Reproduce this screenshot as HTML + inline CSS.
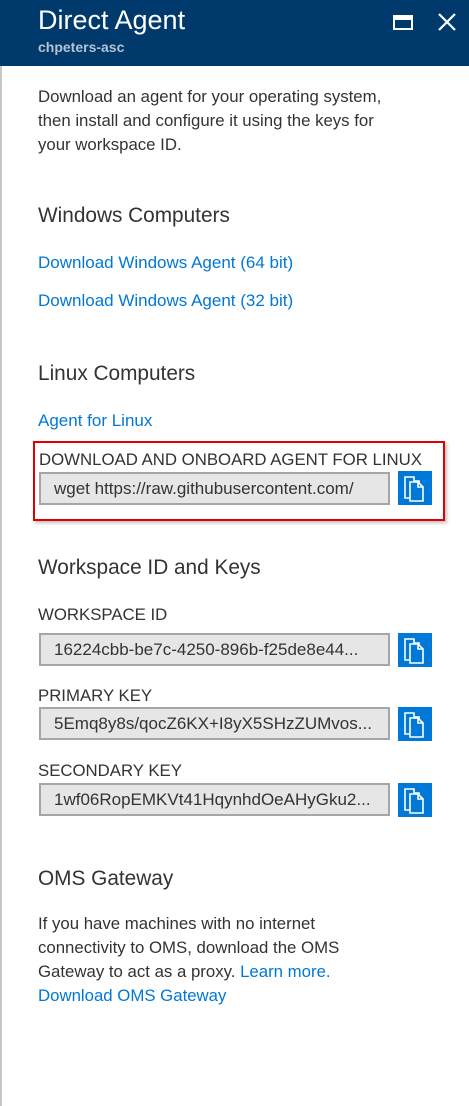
<!DOCTYPE html>
<html><head><style>
*{margin:0;padding:0;box-sizing:border-box}
body{width:469px;height:1106px;background:#fff;font-family:"Liberation Sans",sans-serif;color:#333;position:relative;overflow:hidden}
.a{position:absolute;white-space:nowrap}
.hdr{position:absolute;left:0;top:0;width:469px;height:66px;background:#003a6c}
.lb{position:absolute;left:0;top:66px;width:2px;height:1040px;background:#c8c8c8}
.t{font-size:16.8px;line-height:24px}
.h{font-size:20.8px;color:#333}
.l{color:#0078d7;font-size:17px}
.lab{font-size:16.8px;color:#333}
.in{position:absolute;left:39px;width:351px;height:33px;background:#e6e6e6;border:2px solid #a6a6a6;font-size:17px;line-height:29px;padding-left:13px;color:#333;white-space:nowrap;overflow:hidden}
.btn{position:absolute;left:398px;width:34px;height:34px;background:#0078d7}
</style></head><body>
<div class="hdr"></div>
<div class="a" style="left:38px;top:5px;font-size:27px;color:#fff">Direct Agent</div>
<div class="a" style="left:38px;top:39px;font-size:14px;font-weight:bold;color:#b4c2d2">chpeters-asc</div>
<div style="position:absolute;left:393px;top:15px;width:20px;height:15px;border:2px solid #fff;border-top-width:5px"></div>
<svg style="position:absolute;left:438px;top:13px" width="18" height="18" viewBox="0 0 18 18"><path d="M1 1L17 17M17 1L1 17" stroke="#fff" stroke-width="2.2"/></svg>
<div class="lb"></div>

<div class="a t" style="left:38px;top:85px">Download an agent for your operating system,<br>then install and configure it using the keys for<br>your workspace ID.</div>
<div class="a h" style="left:38px;top:204px">Windows Computers</div>
<div class="a l" style="left:38px;top:253px">Download Windows Agent (64 bit)</div>
<div class="a l" style="left:38px;top:291px">Download Windows Agent (32 bit)</div>
<div class="a h" style="left:38px;top:362px">Linux Computers</div>
<div class="a l" style="left:38px;top:411px">Agent for Linux</div>

<div style="position:absolute;left:33px;top:441px;width:412px;height:80px;border:2px solid #e00000;box-shadow:2px 2px 3px rgba(0,0,0,.25)"></div>
<div class="a lab" style="left:39px;top:450px">DOWNLOAD AND ONBOARD AGENT FOR LINUX</div>
<div class="in" style="top:472px">wget https://raw.githubusercontent.com/</div>
<div class="btn" style="top:471px"></div>

<div class="a h" style="left:38px;top:556px">Workspace ID and Keys</div>
<div class="a lab" style="left:38px;top:605px">WORKSPACE ID</div>
<div class="in" style="top:633px">16224cbb-be7c-4250-896b-f25de8e44...</div>
<div class="btn" style="top:633px"></div>
<div class="a lab" style="left:38px;top:686px">PRIMARY KEY</div>
<div class="in" style="top:707px">5Emq8y8s/qocZ6KX+I8yX5SHzZUMvos...</div>
<div class="btn" style="top:707px"></div>
<div class="a lab" style="left:38px;top:761px">SECONDARY KEY</div>
<div class="in" style="top:783px">1wf06RopEMKVt41HqynhdOeAHyGku2...</div>
<div class="btn" style="top:783px"></div>

<div class="a h" style="left:38px;top:867px">OMS Gateway</div>
<div class="a t" style="left:38px;top:912px">If you have machines with no internet<br>connectivity to OMS, download the OMS<br>Gateway to act as a proxy. <span style="color:#0078d7">Learn more.</span><br><span style="color:#0078d7">Download OMS Gateway</span></div>

<svg width="0" height="0" style="position:absolute"><defs><g id="cp"><path d="M3 3h9v4h5v17H3z" fill="#0078d7" stroke="#fff" stroke-width="1.6"/><path d="M8 8h8l5 5v14H8z" fill="#0078d7" stroke="#fff" stroke-width="1.6"/><path d="M16 8v5h5" fill="none" stroke="#fff" stroke-width="1.6"/></g></defs></svg>
<svg style="position:absolute;left:402px;top:474px" width="26" height="30"><use href="#cp"/></svg>
<svg style="position:absolute;left:402px;top:636px" width="26" height="30"><use href="#cp"/></svg>
<svg style="position:absolute;left:402px;top:710px" width="26" height="30"><use href="#cp"/></svg>
<svg style="position:absolute;left:402px;top:786px" width="26" height="30"><use href="#cp"/></svg>
</body></html>
